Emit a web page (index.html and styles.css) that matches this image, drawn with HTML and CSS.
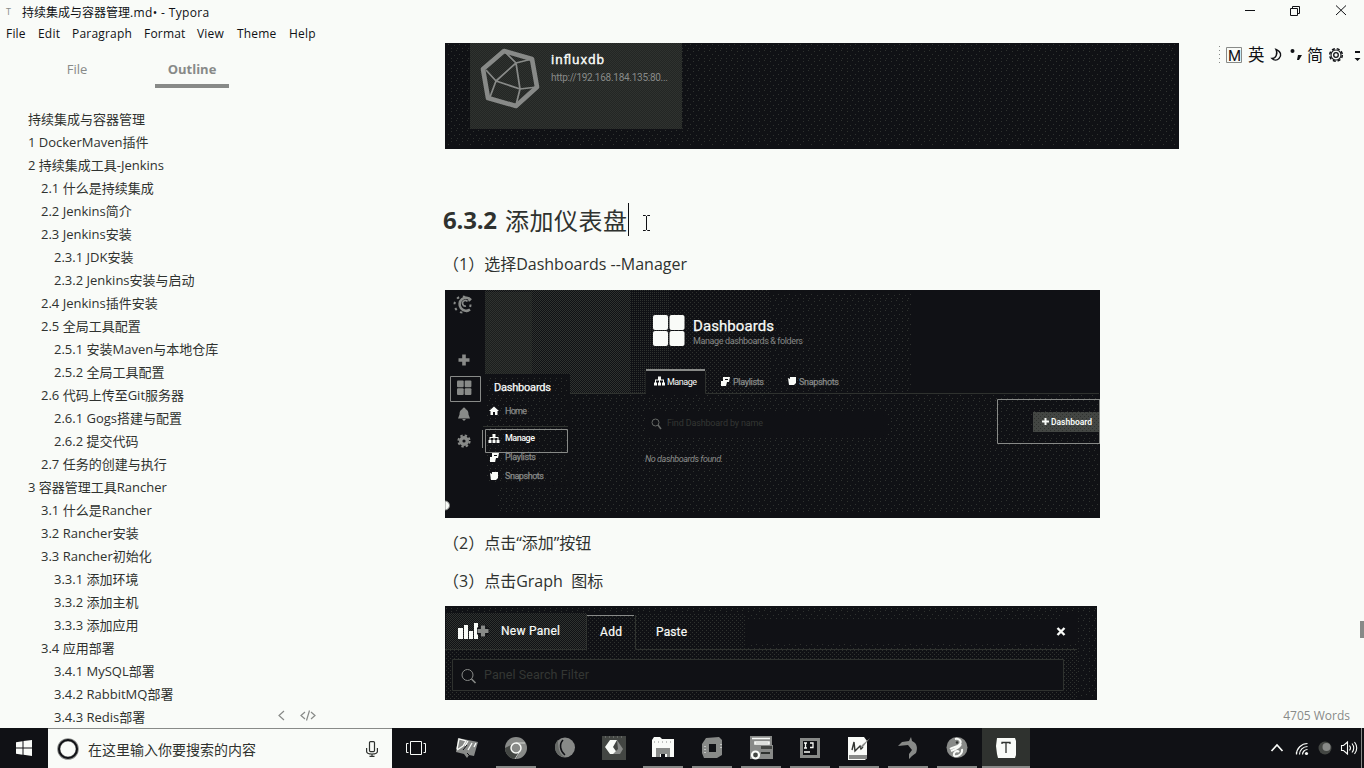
FILE: index.html
```html
<!DOCTYPE html>
<html lang="zh-CN">
<head>
<meta charset="utf-8">
<title>持续集成与容器管理.md• - Typora</title>
<link rel="stylesheet" href="styles.css">
</head>
<body>
<div class="window">
  <header class="titlebar">
    <span class="app-mark">T</span>
    <span class="title"><span class="title-cjk">持续集成与容器管理</span>.md• - Typora</span>
    <svg class="controls" width="124" height="23" viewBox="1240 0 124 23" fill="none" stroke="#101115">
      <path d="M1245 10.5h10M1290.500 8.500h7v7h-7zM1292.500 8.500v-2h7v7h-2M1336 5.500l10 9.500M1346 5.500l-10 9.500"/>
    </svg>
  </header>
  <nav class="menubar">
    <span>File</span><span>Edit</span><span>Paragraph</span><span>Format</span><span>View</span><span>Theme</span><span>Help</span>
  </nav>
  <div class="main">
    <aside class="sidebar">
      <div class="tabs"><span class="tab">File</span><span class="tab active">Outline</span></div>
      <ul class="outline">
        <li>持续集成与容器管理</li>
        <li>1 DockerMaven插件</li>
        <li>2 持续集成工具-Jenkins</li>
        <li class="l2">2.1 什么是持续集成</li>
        <li class="l2">2.2 Jenkins简介</li>
        <li class="l2">2.3 Jenkins安装</li>
        <li class="l3">2.3.1 JDK安装</li>
        <li class="l3">2.3.2 Jenkins安装与启动</li>
        <li class="l2">2.4 Jenkins插件安装</li>
        <li class="l2">2.5 全局工具配置</li>
        <li class="l3">2.5.1 安装Maven与本地仓库</li>
        <li class="l3">2.5.2 全局工具配置</li>
        <li class="l2">2.6 代码上传至Git服务器</li>
        <li class="l3">2.6.1 Gogs搭建与配置</li>
        <li class="l3">2.6.2 提交代码</li>
        <li class="l2">2.7 任务的创建与执行</li>
        <li>3 容器管理工具Rancher</li>
        <li class="l2">3.1 什么是Rancher</li>
        <li class="l2">3.2 Rancher安装</li>
        <li class="l2">3.3 Rancher初始化</li>
        <li class="l3">3.3.1 添加环境</li>
        <li class="l3">3.3.2 添加主机</li>
        <li class="l3">3.3.3 添加应用</li>
        <li class="l2">3.4 应用部署</li>
        <li class="l3">3.4.1 MySQL部署</li>
        <li class="l3">3.4.2 RabbitMQ部署</li>
        <li class="l3">3.4.3 Redis部署</li>
      </ul>
      <svg class="side-tools" width="42" height="14" viewBox="276 709 42 14" fill="none" stroke="#888a88" stroke-width="1.2">
        <path d="M284 711l-5 4.500 5 4.500M305 712l-4 3.500 4 3.500M311 712l4 3.500-4 3.500M309.500 710.500l-3 10"/>
      </svg>
    </aside>

    <article class="doc">
      <svg class="fig fig-source" width="734" height="106" viewBox="445 43 734 106">
        <defs>
          <pattern id="checker" width="2" height="2" patternUnits="userSpaceOnUse"><path d="M0 0h1v1H0zM1 1h1v1H1z" fill="#2f322f"/></pattern>
          <pattern id="rows" width="2" height="2" patternUnits="userSpaceOnUse"><path d="M0 0h1v1H0z" fill="#2f322f"/></pattern>
          <pattern id="quarter" width="4" height="4" patternUnits="userSpaceOnUse"><path d="M0 0h1v1H0zM2 2h1v1H2z" fill="#2f322f"/></pattern>
          <pattern id="sparse" width="11" height="10" patternUnits="userSpaceOnUse"><path d="M0 1h1v1H0zM5 0h1v1H5zM8 4h1v1H8zM3 5h1v1H3zM6 8h1v1H6zM0 8h1v1H0z" fill="#2f322f"/></pattern>
        </defs>
        <path d="M445 43h734v106H445z" fill="#101115"/>
        <path d="M447 43h730v102H447z" fill="url(#sparse)"/>
        <path d="M470 43h212v86H470z" fill="#232624"/>
        <path d="M470 43h212v86H470z" fill="url(#checker)"/>
        <g fill="none" stroke="#888a88" stroke-linejoin="round">
          <path d="M504 51l28 8 5 28-21 19-28-8-5-29z" stroke-width="4.600"/>
          <path d="M504 51l12 12 16-4M516 63l-20 18-10-11M496 81l-6 16M496 81l24 8-4-26M520 89l17-2M520 89l-4 16" stroke-width="1.700"/>
        </g>
        <g class="ui">
          <text x="551" y="64" font-size="13.500" textLength="53" fill="#f9fbf8" stroke="#f9fbf8" stroke-width=".3">influxdb</text>
          <text x="551" y="81" font-size="10" textLength="117" fill="#888a88">http://192.168.184.135:80...</text>
        </g>
      </svg>

      <h3><b>6.3.2</b> <span class="heading-cjk">添加仪表盘</span><i class="caret"></i>
        <svg class="ibeam" width="9" height="18" viewBox="0 0 9 18" fill="none" stroke="#101115"><path d="M1 1.500h2.500l1 1 1-1H8M4.500 2v14M1 16.500h2.500l1-1 1 1H8"/></svg>
      </h3>
      <p>（1）选择<span class="wide">Dashboards --Manager</span></p>

      <svg class="fig" width="655" height="228" viewBox="445 290 655 228">
        <path d="M445 290h655v228H445z" fill="#101115"/>
        <path d="M485 292h47v100h-47z" fill="#1b1e1d"/>
        <path d="M485 290h145v103H485z" fill="url(#checker)"/>
        <path d="M630 290h40v103h-40z" fill="url(#rows)"/>
        <path d="M670 290h100v103H670z" fill="url(#quarter)"/>
        <path d="M770 292h142v102H770zM497 395h602v119H497z" fill="url(#sparse)"/>
        <path d="M485 374h85v112h-85z" fill="#101115"/>
        <path d="M487 376h80v108h-80z" fill="url(#sparse)"/>
        <path d="M646 411h241v27H646z" fill="#101115"/>
        <path d="M570 393.500h76v-23M705.500 371v22.500H1099M483 426.500h85" fill="none" stroke="#2f322f"/>
        <path d="M646 370h59v24h-59z" fill="#101115"/>
        <path d="M646 370h59" stroke="#888a88" stroke-width="2"/>
        <!-- side navigation -->
        <g fill="none" stroke="#888a88">
          <path d="M471 300a6.500 6.500 0 1 0-1 9.500" stroke-width="2.600"/>
          <path d="M466 306a2.800 2.800 0 1 1 1.500-4.500" stroke-width="1.700"/>
          <circle cx="462.500" cy="304.500" r="8" stroke-width="2" stroke-dasharray="2.500 3.800"/>
          <path d="M464 354.500v11M458.500 360h11" stroke-width="3.600"/>
          <path d="M450.500 376.500h30v25h-30zM485.500 429.500h82v23h-82zM482.500 430v18M997.500 399.500h102v44h-102z"/>
        </g>
        <g fill="#888a88">
          <rect x="457" y="380.500" width="6.700" height="6.700" rx="1"/><rect x="464.700" y="380.500" width="6.700" height="6.700" rx="1"/><rect x="457" y="388.200" width="6.700" height="6.700" rx="1"/><rect x="464.700" y="388.200" width="6.700" height="6.700" rx="1"/>
          <path d="M464 407.500c1 0 1.500 1 1.500 1.500 2.500 1 3 3 3 5.500l1.500 4h-12l1.500-4c0-2.500.5-4.500 3-5.500 0-.5.500-1.500 1.500-1.500zM462 419h4l-2 2z"/>
        </g>
        <circle cx="464" cy="441" r="3.300" fill="none" stroke="#888a88" stroke-width="3.400"/>
        <circle cx="464" cy="441" r="5.600" fill="none" stroke="#888a88" stroke-width="2" stroke-dasharray="2.400 2"/>
        <path d="M445 501a4.500 4.500 0 0 1 0 9z" fill="#f9fbf8" stroke="#888a88"/>
        <g fill="#f9fbf8">
          <rect x="653" y="315" width="15" height="15" rx="2"/><rect x="669.500" y="315" width="15" height="15" rx="2"/><rect x="653" y="331" width="15" height="15" rx="2"/><rect x="669.500" y="331" width="15" height="15" rx="2"/>
          <path d="M494 406.500l5 4.500h-1.500v4H495v-3h-2v3h-2.500v-4H489z"/>
          <path id="tree" d="M492.500 434h3v3h3v3h1v3h-3v-3h1v-2h-3v2h1v3h-3v-3h1v-2h-3v2h1v3h-3v-3h1v-3h3z"/>
          <use href="#tree" x="165.500" y="-57.500"/>
          <path id="play" d="M492 453h7l-1 5h-2l-1 4h-5v-5h2zM494 455v1h3v-1z" fill-rule="evenodd"/>
          <use href="#play" x="231" y="-76"/>
          <path id="snap" d="M490 473l2 1v-2h6v6l-2 2h-5z"/>
          <use href="#snap" x="298" y="-95"/>
        </g>
        <g fill="none" stroke="#666966"><circle cx="655.500" cy="422.500" r="3.500"/><path d="M658 425l3 4" stroke-width="1.500"/></g>
        <path d="M1033 412h66v20h-66z" fill="#434643"/>
        <path d="M1033 412h66v20h-66z" fill="url(#quarter)"/>
        <path d="M1045.500 418v7M1042 421.500h7" stroke="#f9fbf8" stroke-width="2"/>
        <path d="M1099.500 399v45" stroke="#888a88"/>
        <g class="ui" fill="#888a88">
          <text x="494" y="391" font-size="11" textLength="57" fill="#f9fbf8" stroke="#f9fbf8" stroke-width=".25">Dashboards</text>
          <text x="505" y="414" font-size="9" textLength="22" stroke="#888a88" stroke-width=".25">Home</text>
          <text x="505" y="441" font-size="9" textLength="30" fill="#f9fbf8" font-weight="500">Manage</text>
          <text x="505" y="460" font-size="9" textLength="31" stroke="#888a88" stroke-width=".25">Playlists</text>
          <text x="505" y="479" font-size="9" textLength="39" stroke="#888a88" stroke-width=".25">Snapshots</text>
          <text x="693" y="330.500" font-size="15" textLength="81" fill="#f9fbf8" stroke="#f9fbf8" stroke-width=".25">Dashboards</text>
          <text x="693" y="344" font-size="9" textLength="110">Manage dashboards &amp; folders</text>
          <text x="667" y="384.500" font-size="9" textLength="30" fill="#f9fbf8">Manage</text>
          <text x="733" y="384.500" font-size="9" textLength="31" stroke="#888a88" stroke-width=".25">Playlists</text>
          <text x="799" y="384.500" font-size="9" textLength="40" stroke="#888a88" stroke-width=".25">Snapshots</text>
          <text x="667" y="426" font-size="9" textLength="96" fill="#343734">Find Dashboard by name</text>
          <text x="645" y="462" font-size="9" textLength="78" font-style="italic">No dashboards found.</text>
          <text x="1051" y="424.500" font-size="8.500" textLength="41" fill="#f9fbf8" font-weight="600">Dashboard</text>
        </g>
      </svg>

      <p class="p2">（2）点击“添加”按钮</p>
      <p class="p3">（3）点击<span class="wide">Graph&nbsp; </span>图标</p>

      <svg class="fig" width="652" height="94" viewBox="445 606 652 94">
        <path d="M445 606h652v94H445z" fill="#101115"/>
        <path d="M446 608h650v5H446z" fill="url(#sparse)"/>
        <path d="M446 613h141v36H446z" fill="url(#checker)"/>
        <path d="M636 613h110v36H636zM446 650h631v49H446zM588 616h48v35h-48z" fill="url(#quarter)"/>
        <path d="M746 613h315v7H746zM746 642h330v7H746zM1078 613h18v83h-18z" fill="url(#sparse)"/>
        <path d="M453 660h610v30H453z" fill="#101115"/>
        <path d="M445 649.500h142M586.500 615v35M635.500 615v34.500H1077M452.500 659.500h611v31h-611z" fill="none" stroke="#2f322f"/>
        <path d="M587 615.500h47" stroke="#888a88"/>
        <path d="M458 628h5v11h-5zM464 625h4v14h-4zM469 631h4v8h-4zM474 623h4v16h-4z" fill="#f9fbf8"/>
        <path d="M483 625v12M477 631h12" stroke="#101115" stroke-width="7"/>
        <path d="M483 625.500v11M477.500 631h11" stroke="#888a88" stroke-width="4.200"/>
        <path d="M1057.500 628l7 7M1064.500 628l-7 7" stroke="#f9fbf8" stroke-width="2.400"/>
        <g fill="none" stroke="#888a88"><circle cx="467.500" cy="675" r="5.500"/><path d="M471.500 679l4 4" stroke-width="1.600"/></g>
        <g class="ui" fill="#f9fbf8" stroke="#f9fbf8" stroke-width=".2" font-size="12">
          <text x="501" y="635" textLength="59">New Panel</text>
          <text x="600" y="636" textLength="22">Add</text>
          <text x="656" y="636" textLength="31">Paste</text>
          <text x="484" y="679" font-size="12.500" textLength="105" fill="#343734" stroke="none">Panel Search Filter</text>
        </g>
      </svg>
    </article>

    <div class="rail">
      <svg class="ime" width="148" height="24" viewBox="1216 42 148 24" fill="none" stroke="#101115">
        <path d="M1219.500 45v20" stroke="#888a88" stroke-dasharray="1 3"/>
        <path d="M1226.500 46.500h15v15h-15z" stroke="#888a88"/>
        <path d="M1276 48.500c5 2 6 6 3 9-2 2-5 2-7 0 4 0 6-5 4-9z" stroke-width="1.400"/>
        <circle cx="1292.500" cy="50" r="2" fill="#101115" stroke="none"/>
        <path d="M1298 54h4l-3 5h-2z" fill="#101115" stroke="none"/>
        <circle cx="1336" cy="54" r="2.300" stroke-width="1.300"/><circle cx="1336" cy="54" r="5" stroke-width="1.100"/>
        <circle cx="1336" cy="54" r="6.300" stroke-width="1.500" stroke-dasharray="3 1.950"/>
        <path d="M1355 51h5M1354.500 57h6l-3 3z" fill="#101115" stroke="none"/><path d="M1355 51h5" stroke-width="2"/>
        <g class="ime-text" fill="#101115" stroke="none"><text class="latin" x="1228" y="60" font-size="15" textLength="12">M</text><text x="1248" y="60" font-size="16.500">英</text><text x="1307" y="60" font-size="16">简</text></g>
      </svg>
      <span class="scroll-thumb"></span>
      <span class="words">4705 Words</span>
    </div>
  </div>

  <footer class="taskbar">
    <div class="start"><svg width="16" height="16" viewBox="0 0 16 16" fill="#f9fbf8"><path d="M0 2.300L6.500 1.300V7.500H0zM7.500 1.100L16 0v7.500H7.500zM0 8.500h6.500v6.200L0 13.800zM7.500 8.500H16V16l-8.500-1.200z"/></svg></div>
    <div class="search">
      <svg width="22" height="22" viewBox="0 0 22 22" fill="none"><circle cx="11" cy="11" r="9.200" stroke="#888a88" stroke-width="3.200"/><circle cx="11" cy="11" r="9" stroke="#101115" stroke-width="2"/></svg>
      <span>在这里输入你要搜索的内容</span>
      <svg class="mic" width="12" height="16" viewBox="0 0 12 16" fill="none" stroke="#2f322f" stroke-width="1.200"><rect x="3.500" y=".6" width="5" height="10" rx="1"/><path d="M.6 7v3.500c0 2 1.500 2.500 5.400 2.500s5.400-.5 5.400-2.500V7M6 13v2.300M3.500 15.300h5"/></svg>
    </div>
    <div class="apps">
      <div class="app view"><svg width="24" height="24" viewBox="0 0 24 24" fill="none" stroke="#f9fbf8"><path d="M6.500 5.500h11v13h-11zM4.500 7.500h-2v9h2M19.500 7.500h2v9h-2"/></svg></div>
      <div class="app"><svg width="24" height="24" viewBox="0 0 24 24"><path d="M3 2l20 4-4 14-5-1-2 3-3-4-8-2z" fill="#888a88"/><path d="M2 13l2-10 7 2-3 5-6 4M13 5l-3 5M17 7l-4 7M21 7l-2 4" fill="none" stroke="#f9fbf8" stroke-width="1.300"/><path d="M8 14l4-5M12 17l2 2" stroke="#101115"/></svg></div>
      <div class="app run"><svg width="24" height="24" viewBox="0 0 24 24"><circle cx="12" cy="12" r="11" fill="#888a88"/><path d="M1 12a11 11 0 0 0 11 11l4-7-5-9z" fill="#434643"/><circle cx="12" cy="12" r="5" fill="#888a88" stroke="#f9fbf8" stroke-width="1.500"/><path d="M12 7h9M16 15l-5 8" stroke="#f9fbf8" stroke-width=".7"/></svg></div>
      <div class="app"><svg width="24" height="24" viewBox="0 0 24 24"><circle cx="12" cy="11.500" r="10" fill="#888a88"/><path d="M5 4c0 8 1 14 7 17-6 0-10-4-10-10 0-3 1-5 3-7z" fill="#666966"/><path d="M10 4C6 8 7 15 12 19" fill="none" stroke="#101115" stroke-width="1.600"/></svg></div>
      <div class="app"><svg width="24" height="24" viewBox="0 0 24 24"><path d="M0 0h24v24H0z" fill="#434643"/><path d="M8 4h7l-4 7 5 7H8l-5-7z" fill="#f9fbf8"/><path d="M15 4l6 9-3 5h-7l5-5z" fill="#888a88"/><path d="M3 1h20" stroke="#888a88" stroke-dasharray="1 3"/></svg></div>
      <div class="app run"><svg width="24" height="24" viewBox="0 0 24 24"><path d="M1 4l2-3h6l2 2h12v18H1z" fill="#f9fbf8"/><path d="M5 12h14v9h-3v-3H9v3H5z" fill="#888a88"/><path d="M10 18h4v3h-4z" fill="#101115"/><path d="M3 6h17" stroke="#888a88" stroke-dasharray="1 3"/></svg></div>
      <div class="app run"><svg width="24" height="24" viewBox="0 0 24 24"><path d="M6 2l13-1 3 3v15l-5 3H4l-2-5V8z" fill="#888a88"/><path d="M9 8h7v8H9z" fill="#101115"/><path d="M5 10v8M21 8v5" stroke="#f9fbf8" stroke-dasharray="1 2"/></svg></div>
      <div class="app run"><svg width="24" height="24" viewBox="0 0 24 24"><path d="M1 0h22v9h1v14H1z" fill="#888a88"/><path d="M3 2.500h18M6 6h14v2H6z" fill="none" stroke="#f9fbf8" stroke-width="1.600"/><path d="M12 10h11v3H12z" fill="#434643"/><path d="M12 17h9" stroke="#2f322f" stroke-width="2"/><circle cx="6.500" cy="19" r="3.500" fill="#434643" stroke="#f9fbf8" stroke-width="2.200"/></svg></div>
      <div class="app run"><svg width="24" height="24" viewBox="0 0 24 24"><path d="M2 2h20v20H2z" fill="#888a88"/><path d="M5 5h14v14H5z" fill="#101115"/><path d="M6 7h3M7.500 7v5M6 12h3M12 7h3v4.500h-3M6 16h6" fill="none" stroke="#f9fbf8" stroke-width="1.300"/></svg></div>
      <div class="app run"><svg width="24" height="24" viewBox="0 0 24 24"><path d="M1 1h16l3 4v17l-2 2H1z" fill="#f9fbf8"/><path d="M2 19h18v4H2z" fill="#888a88"/><path d="M5 14l2-8 1 9 5-5 1 3 2-2" fill="none" stroke="#2f322f" stroke-width="1.400"/><path d="M23 2l-7 9-3 1 2-3z" fill="#888a88"/></svg></div>
      <div class="app run"><svg width="24" height="24" viewBox="0 0 24 24"><path d="M2 10l4-4 7-1 2-4 1 4c5 2 6 7 4 12l-4 3-3 3v-5l3-4-4-5z" fill="#888a88"/></svg></div>
      <div class="app run"><svg width="24" height="24" viewBox="0 0 24 24"><circle cx="12" cy="11.500" r="10.500" fill="#888a88"/><path d="M10 3c4-1 7 2 5 5s-7 3-10 5M16 8c-1 4-7 6-10 7M17 13c1 5-4 8-8 7M14 16c-2-2-6 0-5 4" fill="none" stroke="#f9fbf8" stroke-width="2"/><circle cx="12" cy="6.500" r="1.200" fill="#2f322f"/></svg></div>
      <div class="app run active"><svg width="24" height="24" viewBox="0 0 24 24"><path d="M3 2h18l1 3v14l-1 3H4l-1-4-1-8z" fill="#f9fbf8"/><path d="M8 8V6.500h8V8M12 6.500V17" fill="none" stroke="#2f322f" stroke-width="1.300"/></svg></div>
    </div>
    <svg class="tray" width="98" height="40" viewBox="1266 728 98 40" fill="none" stroke="#f9fbf8">
      <path d="M1271.500 751l5.500-6 5.500 6" stroke-width="1.700"/>
      <path d="M1296.500 754.500a11 11 0 0 1 11-11M1299.500 754.500a8 8 0 0 1 8-8M1302.500 754.500a5 5 0 0 1 5-5M1296.500 752a13 13 0 0 0 0 2.500" stroke-width="1.200"/><circle cx="1306.500" cy="753.500" r="1.600" fill="#f9fbf8" stroke="none"/>
      <circle cx="1325" cy="748" r="6.500" fill="#434643" stroke="none"/><circle cx="1326.500" cy="747" r="4" fill="#888a88" stroke="none"/>
      <path d="M1341.500 745.500h2l4-3.500v12l-4-3.500h-2zM1349.500 745.500q2 2.500 0 5M1352 743.500q3.500 4.500 0 9M1354.500 742q4.500 6 0 12" stroke-width="1.100"/>
      <path d="M1361.500 728v40" stroke="#888a88"/>
    </svg>
  </footer>
</div>
</body>
</html>
```
FILE: styles.css
```css
* { box-sizing: border-box; }
body { margin: 0; background: #f9fbf8; color: #2f322f; font-family: "Open Sans", "Noto Sans CJK SC", sans-serif; }
svg { display: block; flex: none; }
.window { width: 1364px; height: 768px; display: flex; flex-direction: column; overflow: hidden; }

.titlebar { height: 23px; flex: none; display: flex; align-items: center; color: #101115; font-size: 12px; }
.app-mark { width: 22px; padding-left: 6px; font-size: 9px; color: #888a88; }
.title { flex: 1; white-space: nowrap; letter-spacing: .35px; }
.title-cjk { letter-spacing: 0; }

.menubar { height: 20px; flex: none; display: grid; grid-template-columns: 32px 34px 72px 53px 40px 52px auto; align-items: center; padding-left: 6px; font-size: 12px; color: #101115; letter-spacing: .2px; }

.main { height: 685px; flex: none; display: flex; overflow: hidden; }
.sidebar { width: 328px; flex: none; position: relative; padding-top: 7px; }
.tabs { display: flex; height: 38px; font-size: 13px; color: #888a88; line-height: 38px; text-align: center; }
.tab { width: 74px; margin-left: 40px; }
.tab.active { font-weight: 700; border-bottom: 4px solid #888a88; margin-left: 41px; }
.outline { list-style: none; margin: 20px 0 0; padding: 0 0 0 28px; font-size: 13px; line-height: 23px; white-space: nowrap; }
.outline li { height: 23px; }
.l2 { padding-left: 13px; }
.l3 { padding-left: 26px; }
.side-tools { position: absolute; left: 276px; bottom: 5px; }

.doc { width: 736px; flex: none; margin-left: 115px; }
.fig { margin-left: 2px; }
.ui { font-family: Roboto, sans-serif; }
.doc h3 { display: flex; align-items: center; height: 96px; margin: 0; padding-top: 44px; font-size: 24px; font-weight: 400; }
.doc b { font-weight: 700; width: 62px; letter-spacing: -.2px; }
.heading-cjk { letter-spacing: .5px; }
.caret { width: 1px; height: 33px; background: #101115; }
.ibeam { margin: 8px 0 0 13px; }
.doc p { height: 45px; margin: 0; padding-top: 6px; font-size: 16px; line-height: 26px; white-space: pre; }
.doc .p2 { height: 44px; padding-top: 12px; }
.doc .p3 { height: 44px; padding-top: 6px; }

.rail { flex: 1; display: flex; flex-direction: column; align-items: flex-end; }
.ime-text { font-family: "Noto Sans CJK SC", sans-serif; }
.ime-text .latin { font-family: Roboto, sans-serif; }
.scroll-thumb { width: 4px; height: 17px; margin-top: 554px; background: #888a88; }
.words { margin: 69px 14px 0 0; font-size: 12px; line-height: 18px; color: #888a88; white-space: nowrap; }

.taskbar { height: 40px; flex: none; display: flex; background: #101115; }
.start { width: 48px; display: flex; align-items: center; justify-content: center; }
.search { width: 344px; display: flex; align-items: center; padding: 0 14px 0 9px; background: #f9fbf8; border-top: 1px solid #888a88; font-size: 14px; }
.search span { margin-left: 9px; }
.mic { margin-left: auto; }
.apps { flex: 1; display: flex; gap: 1px; }
.app { position: relative; width: 48px; display: flex; align-items: center; justify-content: center; }
.view { margin-right: 2px; }
.run::after { content: ""; position: absolute; left: 4px; right: 4px; bottom: 0; height: 2px; background: #888a88; }
.active.app { background: #2f322f; }
.active.app::after { left: 0; right: 0; }
```
